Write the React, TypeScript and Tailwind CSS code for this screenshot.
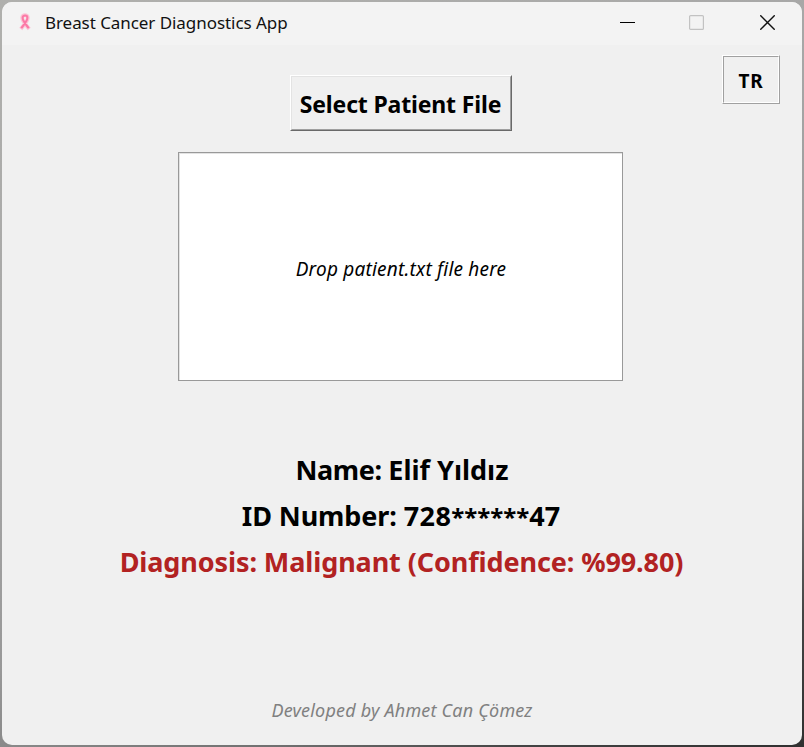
import React from "react";

function RibbonIcon() {
  return (
    <svg width="12" height="18" viewBox="0 0 12 18" fill="none" className="-mt-[3px]" aria-hidden="true">
      <path
        d="M1.8 16 C4.5 12.5 8.8 8.5 8.8 4.8 C8.8 1.2 3.2 1.2 3.2 4.8 C3.2 8.5 7.5 12.5 10.2 16"
        stroke="#fcc4d6"
        strokeWidth="3.8"
      />
      <path
        d="M2.2 15.2 C4.5 12 8.4 8.5 8.4 4.8 C8.4 1.8 3.6 1.8 3.6 4.8 C3.6 8.5 7.5 12 9.8 15.2"
        stroke="#fb7aa6"
        strokeWidth="2"
      />
    </svg>
  );
}

function TitleBar() {
  return (
    <header className="flex h-[43px] shrink-0 items-center bg-[#f3f3f3] pl-[17px]">
      <RibbonIcon />
      <span className="-mt-[2px] ml-[14px] whitespace-nowrap text-[17px] leading-6 tracking-[-0.06px] text-[#111]">
        Breast Cancer Diagnostics App
      </span>
      <div className="-mt-[2px] ml-auto flex items-center pr-[27px]">
        <svg width="15" height="17" viewBox="0 0 15 17" className="mr-[54px]" aria-hidden="true">
          <path d="M0 8.5H15" stroke="#000" />
        </svg>
        <svg width="15" height="15" viewBox="0 0 15 15" className="mr-[56px]" fill="none" aria-hidden="true">
          <rect x="0.6" y="0.6" width="13.8" height="13.8" rx="1" stroke="#c2c2c2" strokeWidth="1.2" />
        </svg>
        <svg width="15" height="15" viewBox="0 0 15 15" aria-hidden="true">
          <path d="M0.3 0.3L14.7 14.7M14.7 0.3L0.3 14.7" stroke="#111" strokeWidth="1.4" />
        </svg>
      </div>
    </header>
  );
}

export default function App() {
  return (
    <div className="h-[747px] w-[804px] overflow-hidden bg-[linear-gradient(155deg,#b0b0ad_0%,#a6a6a6_40%,#989898_60%,#707070_78%,#444_88%,#303030_100%)] p-[2px] font-['Noto_Sans','Open_Sans',sans-serif]">
      <div className="flex h-full flex-col overflow-hidden rounded-[10px] bg-[#f0f0f0]">
        <TitleBar />
        <main className="flex flex-1 flex-col">
          <div className="grid h-[107px] grid-cols-[288px_222px_1fr] items-start">
            <span />
            <button className="mt-[30px] h-[56px] border border-t-white border-l-white border-r-[#696969] border-b-[#696969] text-center">
              <span className="flex h-full items-center justify-center whitespace-nowrap border border-t-[#e3e3e3] border-l-[#e3e3e3] border-r-[#a0a0a0] border-b-[#a0a0a0] pt-[3px] pr-px text-[23px] font-bold tracking-[-0.16px] text-black">
                Select Patient File
              </span>
            </button>
            <button className="mt-[10px] mr-[22px] h-[49px] w-[58px] justify-self-end border border-t-white border-l-white border-r-[#a0a0a0] border-b-[#a0a0a0]">
              <span className="flex h-full items-center justify-center border border-t-[#a0a0a0] border-l-[#a0a0a0] border-r-white border-b-white pt-[3px] text-[19px] font-bold tracking-[0.8px] text-black">
                TR
              </span>
            </button>
          </div>
          <div className="ml-[176px] flex h-[229px] w-[445px] items-center justify-center border border-[#999] bg-white shadow-[inset_1px_1px_0_#e3e3e3]">
            <span className="whitespace-nowrap pt-[5px] pl-px text-[19px] italic tracking-[0.2px] text-black">
              Drop patient.txt file here
            </span>
          </div>
          <div className="mt-[66px] flex flex-col items-center text-[27px] font-bold leading-[46px] text-black">
            <p className="whitespace-nowrap">
              <span className="tracking-[-0.4px]">Name: </span>Elif Yıldız
            </p>
            <p className="whitespace-nowrap pr-[2px]">
              <span className="tracking-[-0.1px]">ID Number: </span>
              <span className="tracking-[0.4px]">728</span>
              <span className="text-[24px] leading-none">******</span>47
            </p>
            <p className="whitespace-nowrap pr-px tracking-[-0.1px] text-[#b22222]">
              Diagnosis: Malignant (Confidence: %99.80)
            </p>
          </div>
          <footer className="mt-auto mb-[23px] whitespace-nowrap text-center text-[18px] leading-6 italic tracking-[0.2px] text-[#808080]">
            Developed by Ahmet Can Çömez
          </footer>
        </main>
      </div>
    </div>
  );
}
